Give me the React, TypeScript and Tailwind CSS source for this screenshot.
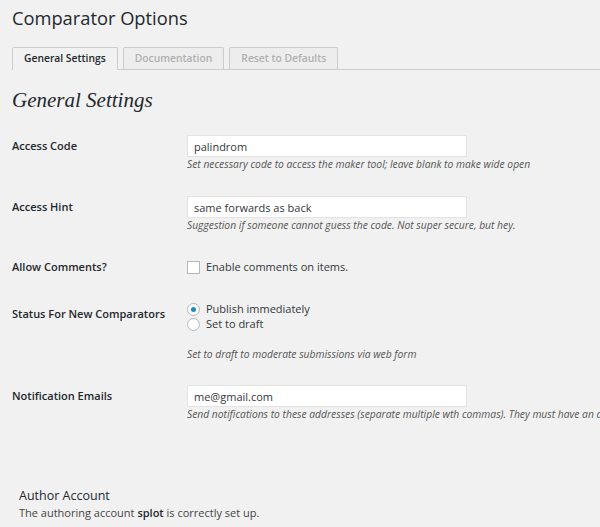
import { useState } from 'react'

const sans = { fontFamily: '"Open Sans", "Liberation Sans", sans-serif' }

function Row({ label, children, top }: { label: string; children: React.ReactNode; top: string }) {
  return (
    <div className={`flex ${top}`}>
      <div className="w-[175px] shrink-0 h-[22px] flex items-center text-[11px] font-semibold text-[#23282d]">
        {label}
      </div>
      <div className="flex-1 min-w-0">{children}</div>
    </div>
  )
}

function TextInput({ value }: { value: string }) {
  const [v, setV] = useState(value)
  return (
    <input
      value={v}
      onChange={(e) => setV(e.target.value)}
      className="block w-[280px] h-[22px] bg-white border border-[#e3e3e3] px-[6px] text-[11px] text-[#32373c] outline-none"
      style={sans}
    />
  )
}

function Desc({ children, className = '' }: { children: React.ReactNode; className?: string }) {
  return (
    <p className={`text-[10.3px] leading-[14px] italic text-[#555] whitespace-nowrap ${className}`}>
      {children}
    </p>
  )
}

export default function App() {
  const [status, setStatus] = useState('publish')
  const [comments, setComments] = useState(false)

  return (
    <div className="min-h-[527px] w-[600px] overflow-hidden bg-[#f1f1f1] pl-[12px] pt-[3px]" style={sans}>
      <h1 className="text-[18.3px] leading-[29px] text-[#23282d]">Comparator Options</h1>

      <div className="mt-[15px] flex items-end gap-[5px] border-b border-[#ccc] h-[23px]">
        <div className="h-[23px] -mb-px px-[11px] flex items-center border border-b-0 border-[#ccc] rounded-t-[2px] bg-[#f1f1f1] text-[10.3px] font-semibold text-[#23282d]">
          General Settings
        </div>
        <div className="h-[22px] px-[11px] flex items-center border border-b-0 border-[#ccc] rounded-t-[2px] bg-[#ededed] text-[10.3px] font-semibold text-[#b0b0b0]">
          Documentation
        </div>
        <div className="h-[22px] px-[11px] flex items-center border border-b-0 border-[#ccc] rounded-t-[2px] bg-[#ededed] text-[10.3px] font-semibold text-[#b0b0b0]">
          Reset to Defaults
        </div>
      </div>

      <h2
        className="mt-[15px] text-[21px] leading-[30px] italic text-[#23282d]"
        style={{ fontFamily: '"Liberation Serif", serif' }}
      >
        General Settings
      </h2>

      <Row label="Access Code" top="mt-[20px]">
        <TextInput value="palindrom" />
        <Desc>Set necessary code to access the maker tool; leave blank to make wide open</Desc>
      </Row>

      <Row label="Access Hint" top="mt-[25px]">
        <TextInput value="same forwards as back" />
        <Desc>Suggestion if someone cannot guess the code. Not super secure, but hey.</Desc>
      </Row>

      <Row label="Allow Comments?" top="mt-[24px]">
        <label className="h-[22px] flex items-center gap-[6px] text-[11px] text-[#32373c]">
          <span
            onClick={() => setComments(!comments)}
            className="w-[13px] h-[13px] bg-white border border-[#b4b9be] shrink-0 flex items-center justify-center text-[10px] text-[#1e8cbe]"
          >
            {comments ? '✓' : ''}
          </span>
          Enable comments on items.
        </label>
      </Row>

      <div className="flex mt-[24px]">
        <div className="w-[175px] shrink-0 h-[22px] flex items-center text-[11px] font-semibold text-[#23282d] mt-[1px]">
          Status For New Comparators
        </div>
        <div className="flex-1">
          {[
            ['publish', 'Publish immediately'],
            ['draft', 'Set to draft'],
          ].map(([key, text]) => (
            <label
              key={key}
              onClick={() => setStatus(key)}
              className="h-[15px] flex items-center gap-[6px] text-[11px] text-[#32373c]"
            >
              <span className="w-[13px] h-[13px] rounded-full bg-white border border-[#b4b9be] shrink-0 flex items-center justify-center">
                {status === key && <span className="w-[5px] h-[5px] rounded-full bg-[#1e8cbe]" />}
              </span>
              {text}
            </label>
          ))}
          <Desc className="mt-[15px]">Set to draft to moderate submissions via web form</Desc>
        </div>
      </div>

      <Row label="Notification Emails" top="mt-[24px]">
        <TextInput value="me@gmail.com" />
        <Desc>
          Send notifications to these addresses (separate multiple wth commas). They must have an admin
          account on this site.
        </Desc>
      </Row>

      <div className="mt-[66px] pl-[7px] text-[#23282d]">
        <h3 className="text-[12.5px] leading-[17px]">Author Account</h3>
        <p className="text-[11px] leading-[17px] text-[#444]">
          The authoring account <strong className="font-semibold text-[#23282d]">splot</strong> is correctly set up.
        </p>
      </div>
    </div>
  )
}
